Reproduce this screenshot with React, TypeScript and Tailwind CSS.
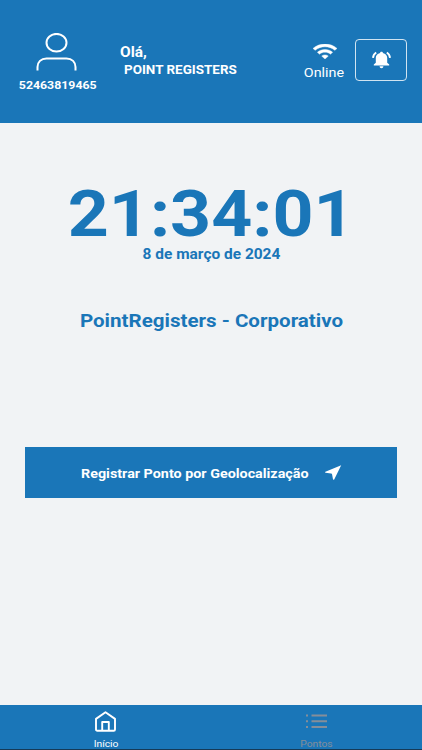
const clock = { time: "21:34:01", date: "8 de março de 2024" };
const user = { id: "52463819465", name: "POINT REGISTERS" };

function UserIcon() {
  return (
    <svg className="h-[38px] w-[41px]" viewBox="0 0 41 38" fill="none" stroke="currentColor" strokeWidth="2">
      <ellipse cx="20.5" cy="9.7" rx="10" ry="8.8" />
      <path d="M1.500 37.500v-3.500c0-5 3.500-8.500 9-8.500h20c5.500 0 9 3.500 9 8.500v3.500" />
    </svg>
  );
}

function WifiIcon() {
  return (
    <svg className="h-[15px] w-6" viewBox="1 4.400 22 15.600" preserveAspectRatio="none" fill="currentColor" stroke="currentColor" strokeWidth="0.400">
      <path d="M1 9l2 2c4.970-4.970 13.030-4.970 18 0l2-2C16.930 2.930 7.080 2.930 1 9zm8 8l3 3 3-3c-1.650-1.660-4.340-1.660-6 0zm-4-4l2 2c2.760-2.760 7.240-2.760 10 0l2-2C15.140 9.140 8.870 9.140 5 13z" />
    </svg>
  );
}

function BellIcon() {
  return (
    <svg className="h-[18px] w-[19px]" viewBox="0 0 19 18" fill="none">
      <path
        fill="currentColor"
        d="M9.500.7c.9 0 1.400.5 1.400 1.200 2.700.6 4.300 2.500 4.300 5.100v4.700l2 1.900v.9H1.800v-.9l2-1.900V7c0-2.600 1.600-4.500 4.300-5.100C8.100 1.200 8.600.7 9.500.7zM7.600 15.300h3.800c0 1.200-.8 1.900-1.900 1.900s-1.900-.7-1.900-1.900z"
      />
      <path stroke="currentColor" strokeWidth="1.900" d="M4.200 1.500C2.200 2.800 1.200 4.400 1 6.900M14.800 1.500c2 1.300 3 2.900 3.200 5.400" />
    </svg>
  );
}

function ArrowIcon() {
  return (
    <svg className="h-[15px] w-[17px]" viewBox="0 0 17 15" fill="currentColor">
      <path d="M16.200.2L.4 6.700c-.5.300-.4.900.1 1l5.600.9c.6.100.9.400 1 .9l.9 4.800c.1.600.9.600 1.200.1z" />
    </svg>
  );
}

function HomeIcon() {
  return (
    <svg className="h-[21px] w-[21px] shrink-0" viewBox="0 0 21 21" fill="none" stroke="currentColor" strokeWidth="1.900" strokeLinejoin="round">
      <path d="M1 7.900L10.500 1.200 20 7.900V18.400c0 .8-.5 1.300-1.300 1.300H2.300c-.8 0-1.300-.5-1.300-1.300z" />
      <path d="M7.200 19.500v-8.500h6.600v8.500" />
    </svg>
  );
}

function ListIcon() {
  return (
    <svg className="h-[15px] w-[21px] shrink-0" viewBox="0 0 21 15" fill="currentColor">
      <path d="M0 .5h2v2H0zM5.500.5H21v2H5.500zM0 6.300h2v2H0zM5.500 6.300H21v2H5.500zM0 12h2v2H0zM5.500 12H21v2H5.500z" />
    </svg>
  );
}

export default function App() {
  return (
    <div className="flex h-[750px] w-[422px] flex-col overflow-hidden bg-[#f1f3f5] font-['Roboto',sans-serif] whitespace-nowrap">
      {/* Header */}
      <header className="flex h-[123px] flex-none bg-[#1a76b8] text-white">
        <div className="flex w-[115px] flex-col items-center pt-[33px]">
          <div className="mr-[2px]">
            <UserIcon />
          </div>
          <span className="mt-[7px] scale-x-[1.12] text-[11px] leading-4 font-bold">{user.id}</span>
        </div>
        <div className="flex flex-1 flex-col items-start pt-[43px] pl-[5px]">
          <span className="origin-left scale-x-[1.12] text-[13.800px] leading-[18px] font-bold">Olá,</span>
          <span className="mt-px ml-1 origin-left scale-x-[1.12] text-[12px] leading-4 font-bold">{user.name}</span>
        </div>
        <div className="flex w-[60px] flex-col items-center pt-[44px]">
          <div className="ml-[1px]">
            <WifiIcon />
          </div>
          <span className="mt-[5px] scale-x-[1.12] text-[12.800px] leading-[18px]">Online</span>
        </div>
        <button className="mt-[39px] mr-[15px] ml-[1px] flex h-[42px] w-[52px] items-center justify-center rounded-[4px] border border-white/80">
          <BellIcon />
        </button>
      </header>

      {/* Clock and register button */}
      <main className="flex flex-1 flex-col items-center text-[#1a76b8]">
        <h1 className="mt-[60px] ml-[1px] scale-x-[1.11] text-[64.500px] leading-[62px] font-bold">{clock.time}</h1>
        <p className="scale-x-[1.12] text-[13.800px] leading-[18px] font-bold">{clock.date}</p>
        <h2 className="mt-[46px] scale-x-[1.12] text-[18.350px] leading-6 font-bold">PointRegisters - Corporativo</h2>
        <button className="mt-[114px] flex h-[51px] w-[372px] items-center bg-[#1a76b8] pl-[56px] text-left text-white">
          <span className="w-[228px]">
            <span className="inline-block origin-left scale-x-[1.12] text-[12.800px] font-bold">
              Registrar Ponto por Geolocalização
            </span>
          </span>
          <span className="ml-[16px]">
            <ArrowIcon />
          </span>
        </button>
      </main>

      {/* Tabs */}
      <nav className="flex h-[45px] flex-none border-b border-[#153a58] bg-[#1a76b8]">
        <a className="flex flex-1 flex-col items-center pt-[6px] text-white">
          <HomeIcon />
          <span className="mt-[6px] ml-px scale-x-[1.12] text-[9.200px] leading-3">Início</span>
        </a>
        <a className="flex flex-1 flex-col items-center pt-[9px] text-[#858e99]">
          <ListIcon />
          <span className="mt-[9px] scale-x-[1.12] text-[9.200px] leading-3">Pontos</span>
        </a>
      </nav>
    </div>
  );
}
